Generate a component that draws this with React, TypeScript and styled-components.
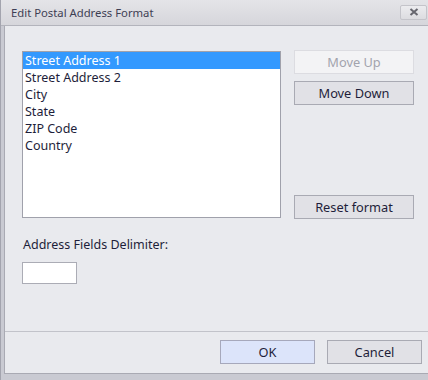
import React, { FC, useState } from 'react'
import styled, { createGlobalStyle } from 'styled-components'

const GlobalStyle = createGlobalStyle`
  html, body {
    margin: 0;
    padding: 0;
    background: #c9cad2;
  }
  body {
    font-family: 'Noto Sans', 'Open Sans', sans-serif;
    font-size: 12.5px;
    color: #1e1e3a;
  }
`

const Window = styled('div')`
  width: 428px;
  height: 380px;
  box-sizing: border-box;
  display: flex;
  flex-direction: column;
  background: #c9cad2;
  border-left: 1px solid #a3a4ae;
  overflow: hidden;
`

const TitleBar = styled('div')`
  height: 25px;
  flex: none;
  display: flex;
  align-items: center;
  justify-content: space-between;
  padding: 0 1px 0 10px;
  background: linear-gradient(#e4e4e8, #d6d6db);
  border-bottom: 1px solid #b3b4bc;
`

const Title = styled('span')`
  color: #3e3e54;
  font-size: 11.3px;
`

const CloseButton = styled('button')`
  width: 27px;
  height: 15px;
  margin-top: -1px;
  padding: 0;
  display: flex;
  align-items: center;
  justify-content: center;
  background: linear-gradient(#ececef, #dcdce0);
  border: 1px solid #c4c4ca;
  border-radius: 2px;
`

const Frame = styled('div')`
  flex: 1;
  display: flex;
  padding: 0 0 6px 3px;
`

const Client = styled('div')`
  flex: 1;
  display: flex;
  flex-direction: column;
  background: #e9eaee;
  border-left: 1px solid #a9aab3;
  border-bottom: 1px solid #a9aab3;
`

const Main = styled('div')`
  height: 306px;
  box-sizing: border-box;
  display: grid;
  grid-template-columns: 259px 120px;
  column-gap: 13px;
  align-content: start;
  padding: 25px 0 0 17px;
  border-bottom: 1px solid #c2c3ca;
`

const LeftColumn = styled('div')`
  display: flex;
  flex-direction: column;
`

const ListBox = styled('ul')`
  list-style: none;
  margin: 0;
  padding: 0;
  height: 167px;
  box-sizing: border-box;
  background: #ffffff;
  border: 1px solid #a0a1ab;
`

const ListItem = styled('li')<{ $selected?: boolean }>`
  height: 17px;
  line-height: 17px;
  padding-left: 2px;
  white-space: nowrap;
  cursor: default;
  background: ${(p) => (p.$selected ? '#3399ff' : 'transparent')};
  color: ${(p) => (p.$selected ? '#ffffff' : '#1e1e3a')};
`

const FieldLabel = styled('label')`
  margin-top: 19px;
  line-height: 16px;
  padding-left: 1px;
`

const DelimiterInput = styled('input')`
  margin-top: 9px;
  width: 55px;
  height: 22px;
  box-sizing: border-box;
  border: 1px solid #abacb5;
  background: #ffffff;
  outline: none;
`

const RightColumn = styled('div')`
  height: 169px;
  display: flex;
  flex-direction: column;
  gap: 7px;
  margin-top: -1px;
`

const DialogButton = styled('button')<{ $tone?: 'default' | 'primary' | 'disabled' }>`
  height: 24px;
  box-sizing: border-box;
  padding: 0;
  font-family: inherit;
  font-size: 12.8px;
  border: 1px solid
    ${(p) => (p.$tone === 'disabled' ? '#dcdce1' : p.$tone === 'primary' ? '#a6a8bb' : '#a9aab3')};
  background: ${(p) =>
    p.$tone === 'disabled' ? '#f3f3f5' : p.$tone === 'primary' ? '#dce4fa' : '#e1e1e6'};
  color: ${(p) => (p.$tone === 'disabled' ? '#a2a3ad' : '#1e1e3a')};
`

const Spacer = styled('div')`
  flex: 1;
`

const Footer = styled('div')`
  flex: 1;
  display: flex;
  justify-content: flex-end;
  align-items: flex-start;
  gap: 12px;
  padding: 8px 6px 0 0;
`

const FooterButton = styled(DialogButton)`
  width: 95px;
`

const items = ['Street Address 1', 'Street Address 2', 'City', 'State', 'ZIP Code', 'Country']

const App: FC = () => {
  const [selected, setSelected] = useState(0)

  return (
    <>
      <GlobalStyle />
      <Window>
        <TitleBar>
          <Title>Edit Postal Address Format</Title>
          <CloseButton aria-label="Close">
            <svg width="10" height="8" viewBox="0 0 10 8">
              <path d="M1.5 1 L8.5 7 M8.5 1 L1.5 7" stroke="#66666e" strokeWidth="2" />
            </svg>
          </CloseButton>
        </TitleBar>
        <Frame>
          <Client>
            <Main>
              <LeftColumn>
                <ListBox>
                  {items.map((item, i) => (
                    <ListItem key={item} $selected={i === selected} onClick={() => setSelected(i)}>
                      {item}
                    </ListItem>
                  ))}
                </ListBox>
                <FieldLabel htmlFor="delimiter">Address Fields Delimiter:</FieldLabel>
                <DelimiterInput id="delimiter" type="text" />
              </LeftColumn>
              <RightColumn>
                <DialogButton $tone="disabled" disabled>
                  Move Up
                </DialogButton>
                <DialogButton>Move Down</DialogButton>
                <Spacer />
                <DialogButton>Reset format</DialogButton>
              </RightColumn>
            </Main>
            <Footer>
              <FooterButton $tone="primary">OK</FooterButton>
              <FooterButton>Cancel</FooterButton>
            </Footer>
          </Client>
        </Frame>
      </Window>
    </>
  )
}

export default App
